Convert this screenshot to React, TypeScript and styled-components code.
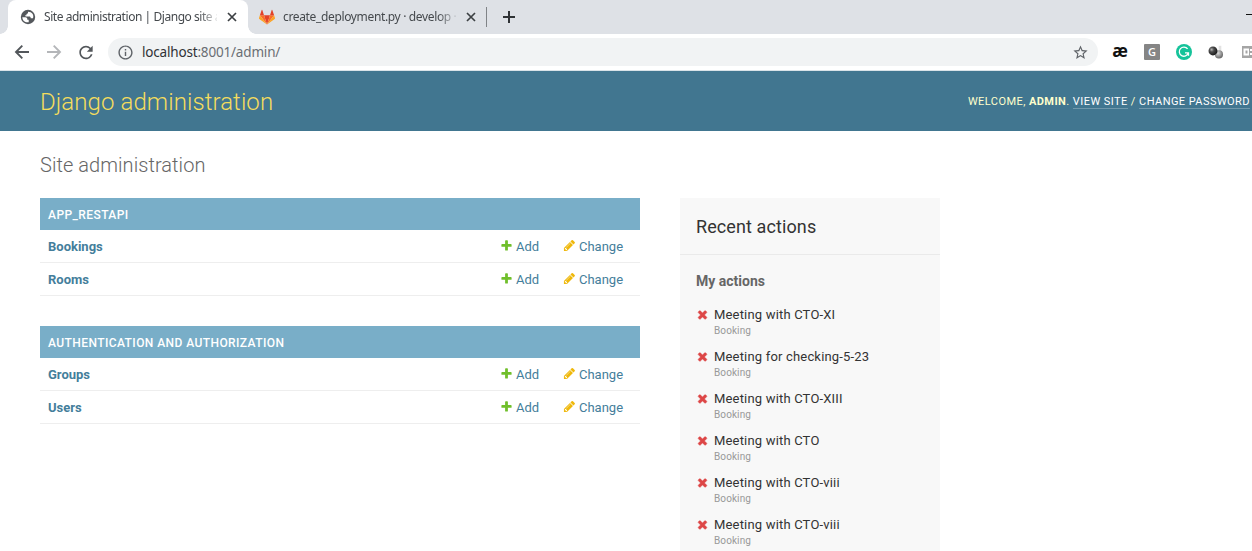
import React from 'react';
import styled, { createGlobalStyle } from 'styled-components';
import { MdRefresh, MdInfoOutline, MdStarBorder } from 'react-icons/md';

const Global = createGlobalStyle`
  *, *::before, *::after { box-sizing: border-box; }
  html, body { margin: 0; height: 551px; overflow: hidden; background: #fff; }
  h1, h2, h3, ul { margin: 0; padding: 0; }
`;

const Page = styled.div`
  width: 1252px;
  height: 551px;
  overflow: hidden;
  display: flex;
  flex-direction: column;
  font-family: Roboto, 'Liberation Sans', sans-serif;
  font-size: 13px;
  color: #333;
`;

/* Browser window */

const TabStrip = styled.div`
  height: 34px;
  flex: none;
  display: flex;
  align-items: center;
  background: #dee1e6;
  padding-left: 8px;
  font-family: 'Noto Sans', 'Open Sans', sans-serif;
  font-size: 12px;
  color: #45494d;
`;

const Tab = styled.div<{ $active?: boolean }>`
  position: relative;
  height: 34px;
  width: ${(p) => (p.$active ? 240 : 238)}px;
  display: flex;
  align-items: center;
  padding-left: ${(p) => (p.$active ? 12 : 11)}px;
  background: ${(p) => (p.$active ? '#fff' : 'transparent')};
  border-radius: 8px 8px 0 0;

  &::before,
  &::after {
    content: ${(p) => (p.$active ? "''" : 'none')};
    position: absolute;
    bottom: 0;
    width: 8px;
    height: 8px;
  }
  &::before {
    left: -8px;
    background: radial-gradient(circle at 0 0, transparent 7.5px, #fff 8px);
  }
  &::after {
    right: -8px;
    background: radial-gradient(circle at 100% 0, transparent 7.5px, #fff 8px);
  }
`;

const Favicon = styled.span`
  display: flex;
  width: 16px;
  justify-content: center;
  color: #5f6368;
  flex: none;
`;

const TabTitle = styled.span<{ $spacing: number }>`
  width: 173px;
  margin-left: 8px;
  line-height: 18px;
  letter-spacing: ${(p) => p.$spacing}px;
  white-space: nowrap;
  mask-image: linear-gradient(to right, #000 155px, transparent 176px);
`;

const TabClose = styled.span`
  display: flex;
  margin-left: 8px;
  color: #3c4043;
`;

const TabDivider = styled.span`
  width: 1px;
  height: 20px;
  background: #808387;
`;

const NewTab = styled.span`
  display: flex;
  margin-left: 13px;
  color: #2f3235;
`;

const Minimize = styled.span`
  width: 6px;
  height: 1px;
  margin: -5px 0 0 auto;
  background: #111;
`;

const Toolbar = styled.div`
  height: 37px;
  flex: none;
  display: flex;
  align-items: center;
  padding-left: 12px;
  background: #fff;
  border-bottom: 1px solid #d9e3e8;
`;

const NavButton = styled.span<{ $disabled?: boolean }>`
  display: flex;
  width: 20px;
  margin-right: 12px;
  color: ${(p) => (p.$disabled ? '#b4b6b9' : '#53575b')};
`;

const Omnibox = styled.div`
  width: 990px;
  height: 28px;
  display: flex;
  align-items: center;
  padding: 0 9px;
  border-radius: 14px;
  background: #f1f3f4;
  color: #5f6368;
`;

const Url = styled.span`
  margin-left: 8px;
  flex: 1;
  font-family: 'Noto Sans', 'Open Sans', sans-serif;
  font-size: 13.5px;
  letter-spacing: -0.18px;
  color: #6a6e73;

  b {
    font-weight: 400;
    color: #303236;
  }
`;

const Extensions = styled.div`
  display: flex;
  align-items: center;
  margin-left: 14px;
  gap: 16px;
  width: 140px;
`;

const ExtSlot = styled.span`
  width: 16px;
  height: 16px;
  flex: none;
  display: flex;
  align-items: center;
  justify-content: center;
`;

const Ligature = styled(ExtSlot)`
  height: 24px;
  font: 700 17px/24px 'Open Sans', sans-serif;
  color: #111;
  padding-bottom: 3px;
`;

const GreyBadge = styled(ExtSlot)`
  background: #858585;
  border-radius: 1px;
  color: #fff;
  font: 600 11px/16px 'Open Sans', sans-serif;
`;

/* Django admin */

const Header = styled.header`
  height: 60px;
  flex: none;
  display: flex;
  align-items: center;
  justify-content: space-between;
  padding: 2px 2px 0 40px;
  background: #417690;
  color: #ffc;
`;

const Branding = styled.h1`
  font-size: 24px;
  font-weight: 300;
  line-height: 30px;
  letter-spacing: 0.08px;
  color: #f5dd5d;
`;

const UserTools = styled.div`
  font-size: 11px;
  line-height: 14px;
  font-weight: 400;
  letter-spacing: 0.44px;
  text-transform: uppercase;
  white-space: nowrap;
`;

const ToolLink = styled.a`
  color: #fff;
  border-bottom: 1px solid rgba(255, 255, 255, 0.25);
`;

const Content = styled.main`
  padding: 20px 40px 0;
`;

const PageTitle = styled.h1`
  font-size: 20px;
  font-weight: 300;
  line-height: 28px;
  letter-spacing: 0.06px;
  margin-bottom: 19px;
  color: #666;
`;

const Columns = styled.div`
  display: flex;
  align-items: flex-start;
  gap: 40px;
`;

const AppList = styled.div`
  width: 600px;
  display: flex;
  flex-direction: column;
  gap: 30px;
`;

const Caption = styled.h2`
  height: 32px;
  padding: 1px 8px 0;
  font-size: 12px;
  line-height: 33px;
  font-weight: 500;
  letter-spacing: 0.42px;
  text-transform: uppercase;
  background: #79aec8;
  color: #fff;
`;

const ModelRow = styled.div`
  height: 33px;
  display: flex;
  align-items: center;
  padding: 2px 8px 0;
  line-height: 16px;
  border-bottom: 1px solid #eee;
  color: #447e9b;
`;

const ModelName = styled.a`
  flex: 1;
  font-weight: 700;
`;

const ActionLink = styled.a<{ $width: number }>`
  display: flex;
  align-items: center;
  width: ${(p) => p.$width}px;
  gap: 3px;

  svg {
    margin-top: -3px;
  }
`;

const Sidebar = styled.aside`
  width: 260px;
  height: 400px;
  background: #f8f8f8;
`;

const SidebarTitle = styled.h2`
  height: 57px;
  padding: 0 16px;
  font-size: 18px;
  line-height: 57px;
  font-weight: 400;
  letter-spacing: 0.1px;
  color: #333;
  border-bottom: 1px solid #eaeaea;
`;

const SidebarSubtitle = styled.h3`
  padding: 17px 16px 0;
  font-size: 14px;
  line-height: 18px;
  font-weight: 700;
  color: #666;
`;

const ActionList = styled.ul`
  list-style: none;
  padding: 17px 16px 0;
`;

const ActionItem = styled.li`
  height: 42px;
  display: flex;
  gap: 5px;

  svg {
    margin-top: 1px;
    flex: none;
    overflow: visible;
  }

  path {
    stroke: #dd4646;
    stroke-width: 60px;
  }
`;

const ActionText = styled.div`
  line-height: 16px;
  letter-spacing: 0.18px;
  white-space: nowrap;
`;

const Quiet = styled.div`
  font-size: 10px;
  line-height: 16px;
  letter-spacing: 0.1px;
  color: #999;
`;

const glyphs = {
  add: {
    fill: '#70bf2b',
    d: 'M1600 796v192q0 40-28 68t-68 28h-416v416q0 40-28 68t-68 28h-192q-40 0-68-28t-28-68v-416h-416q-40 0-68-28t-28-68v-192q0-40 28-68t68-28h416v-416q0-40 28-68t68-28h192q40 0 68 28t28 68v416h416q40 0 68 28t28 68z',
  },
  change: {
    fill: '#efb80b',
    d: 'M491 1536l91-91-235-235-91 91v107h128v128h107zm523-928q0-22-22-22-10 0-17 7l-542 542q-7 7-7 17 0 22 22 22 10 0 17-7l542-542q7-7 7-17zm-54-192l416 416-832 832h-416v-416zm683 96q0 53-37 90l-166 166-416-416 166-165q36-38 90-38 53 0 91 38l235 234q37 39 37 91z',
  },
  remove: {
    fill: '#dd4646',
    d: 'M1490 1322q0 40-28 68l-136 136q-28 28-68 28t-68-28l-294-294-294 294q-28 28-68 28t-68-28l-136-136q-28-28-28-68t28-68l294-294-294-294q-28-28-28-68t28-68l136-136q28-28 68-28t68 28l294 294 294-294q28-28 68-28t68 28l136 136q28 28 28 68t-28 68l-294 294 294 294q28 28 28 68z',
  },
};

const Glyph = ({ name }: { name: keyof typeof glyphs }) => (
  <svg width="13" height="13" viewBox="0 0 1792 1792">
    <path fill={glyphs[name].fill} d={glyphs[name].d} />
  </svg>
);

/* Stroked window controls */
const Line = ({ d, size, weight }: { d: string; size: number; weight: number }) => (
  <svg width={size} height={size} viewBox={`0 0 ${size} ${size}`}>
    <path d={d} fill="none" stroke="currentColor" strokeWidth={weight} />
  </svg>
);

const Close = () => <Line size={14} weight={1.7} d="M3 3l8 8M11 3l-8 8" />;
const Plus = () => <Line size={18} weight={2} d="M9 3v12M3 9h12" />;
const ArrowLeft = () => <Line size={20} weight={1.9} d="M17 10H4.500M10.300 3.700L4 10l6.300 6.300" />;
const ArrowRight = () => <Line size={20} weight={1.9} d="M3 10h12.500M9.700 3.700L16 10l-6.300 6.300" />;

/* Dark disc with the land masses cut out as light shapes */
const Globe = () => (
  <svg width="16" height="16" viewBox="0 0 16 16">
    <circle cx="8" cy="8" r="7.2" fill="#54585c" />
    <path
      d="M2.300 8.200h3.200c1 0 1.800.8 1.800 1.700v.8h1.400v2.500c-3.600.6-6.200-1.700-6.400-5zM8 2.700c.3 1.300-.3 2-1.500 2.200v1.400H5.200c0 1 .5 1.300 1.700 1.200h2.500c.9 0 1.300.7 1.300 1.700h2.300c1.200-3.200-.9-6.400-5-6.500z"
      fill="#fff"
    />
  </svg>
);

const GitLab = () => (
  <svg width="16" height="16" viewBox="0 0 16 16">
    <path fill="#e24329" d="M8 15.4L5 6.2h6z" />
    <path fill="#fc6d26" d="M8 15.4L5 6.2H.9zM8 15.4l3-9.2h4.1z" />
    <path fill="#fca326" d="M.9 6.2L0 9q-.1.6.3.9L8 15.4zM15.1 6.2L16 9q.1.6-.3.9L8 15.4z" />
    <path fill="#e24329" d="M.9 6.2H5L3.3.9q-.3-.5-.6 0zM15.1 6.2H11L12.7.9q.3-.5.6 0z" />
  </svg>
);

const Grammarly = () => (
  <svg width="16" height="16" viewBox="0 0 16 16">
    <circle cx="8" cy="8" r="8" fill="#15c39a" />
    <path
      d="M11.6 4.900A4.600 4.600 0 1 0 12.300 9M9 8.900h3.500v2.800"
      fill="none"
      stroke="#fff"
      strokeWidth="1.3"
    />
  </svg>
);

const Spheres = () => (
  <svg width="18" height="16" viewBox="0 0 18 16">
    <defs>
      <radialGradient id="dark" cx=".35" cy=".35" r=".65">
        <stop offset="0" stopColor="#b5b5b5" />
        <stop offset=".4" stopColor="#4c4c4c" />
        <stop offset="1" stopColor="#1c1c1c" />
      </radialGradient>
      <radialGradient id="light" cx=".4" cy=".35" r=".65">
        <stop offset="0" stopColor="#dcdcdc" />
        <stop offset="1" stopColor="#666" />
      </radialGradient>
    </defs>
    <path d="M12 1h3v6h-3z" fill="#e2e2e2" />
    <circle cx="12.3" cy="10.7" r="4.600" fill="url(#light)" />
    <circle cx="5.6" cy="6.8" r="5" fill="url(#dark)" />
  </svg>
);

const Clipped = () => (
  <svg width="16" height="16" viewBox="0 0 16 16">
    <path d="M2 2h14v12H2z" fill="#a5a5a5" />
    <path d="M3.500 4.500H9v7H3.500zM10 5H15v2H10zM10 9H15v2H10z" fill="#fff" />
    <path d="M5.500 6.500h2v3h-2z" fill="#a5a5a5" />
  </svg>
);

const apps = [
  { name: 'App_Restapi', models: ['Bookings', 'Rooms'] },
  { name: 'Authentication and Authorization', models: ['Groups', 'Users'] },
];

const actions = [
  'Meeting with CTO-XI',
  'Meeting for checking-5-23',
  'Meeting with CTO-XIII',
  'Meeting with CTO',
  'Meeting with CTO-viii',
  'Meeting with CTO-viii',
];

export default function App() {
  return (
    <Page>
      <Global />
      <TabStrip>
        <Tab $active>
          <Favicon>
            <Globe />
          </Favicon>
          <TabTitle $spacing={-0.45}>Site administration | Django site a</TabTitle>
          <TabClose>
            <Close />
          </TabClose>
        </Tab>
        <Tab>
          <Favicon>
            <GitLab />
          </Favicon>
          <TabTitle $spacing={-0.35}>create_deployment.py · develop ·</TabTitle>
          <TabClose>
            <Close />
          </TabClose>
        </Tab>
        <TabDivider />
        <NewTab>
          <Plus />
        </NewTab>
        <Minimize />
      </TabStrip>
      <Toolbar>
        <NavButton>
          <ArrowLeft />
        </NavButton>
        <NavButton $disabled>
          <ArrowRight />
        </NavButton>
        <NavButton>
          <MdRefresh size={21} />
        </NavButton>
        <Omnibox>
          <MdInfoOutline size={17} />
          <Url>
            <b>localhost</b>:8001/admin/
          </Url>
          <MdStarBorder size={17} />
        </Omnibox>
        <Extensions>
          <Ligature>æ</Ligature>
          <GreyBadge>G</GreyBadge>
          <ExtSlot>
            <Grammarly />
          </ExtSlot>
          <ExtSlot>
            <Spheres />
          </ExtSlot>
          <ExtSlot>
            <Clipped />
          </ExtSlot>
        </Extensions>
      </Toolbar>
      <Header>
        <Branding>Django administration</Branding>
        <UserTools>
          Welcome, <strong>admin</strong>. <ToolLink>View site</ToolLink> /{' '}
          <ToolLink>Change password</ToolLink>
        </UserTools>
      </Header>
      <Content>
        <PageTitle>Site administration</PageTitle>
        <Columns>
          <AppList>
            {apps.map((app) => (
              <section key={app.name}>
                <Caption>{app.name}</Caption>
                {app.models.map((model) => (
                  <ModelRow key={model}>
                    <ModelName>{model}</ModelName>
                    <ActionLink $width={63}>
                      <Glyph name="add" />
                      Add
                    </ActionLink>
                    <ActionLink $width={69}>
                      <Glyph name="change" />
                      Change
                    </ActionLink>
                  </ModelRow>
                ))}
              </section>
            ))}
          </AppList>
          <Sidebar>
            <SidebarTitle>Recent actions</SidebarTitle>
            <SidebarSubtitle>My actions</SidebarSubtitle>
            <ActionList>
              {actions.map((action, i) => (
                <ActionItem key={i}>
                  <Glyph name="remove" />
                  <ActionText>
                    {action}
                    <Quiet>Booking</Quiet>
                  </ActionText>
                </ActionItem>
              ))}
            </ActionList>
          </Sidebar>
        </Columns>
      </Content>
    </Page>
  );
}
